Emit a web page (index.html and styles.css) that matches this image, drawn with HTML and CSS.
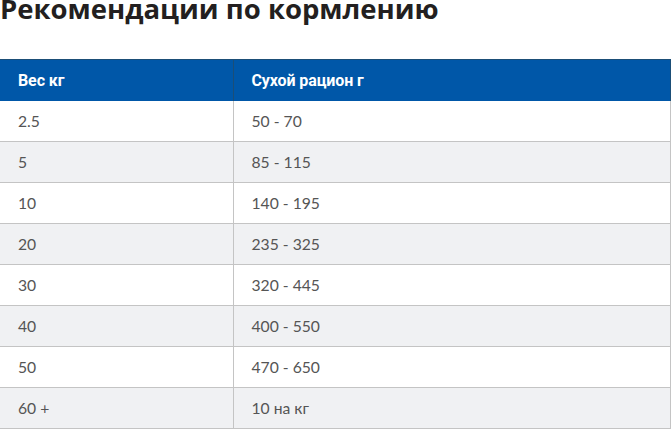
FILE: index.html
```html
<!DOCTYPE html>
<html lang="ru">
<head>
<meta charset="utf-8">
<link rel="stylesheet" href="styles.css">
</head>
<body>
<h1 class="title">Рекомендации по кормлению</h1>
<table class="feed">
  <thead>
    <tr><th class="c1">Вес кг</th><th>Сухой рацион г</th></tr>
  </thead>
  <tbody>
    <tr><td>2.5</td><td>50 - 70</td></tr>
    <tr><td>5</td><td>85 - 115</td></tr>
    <tr><td>10</td><td>140 - 195</td></tr>
    <tr><td>20</td><td>235 - 325</td></tr>
    <tr><td>30</td><td>320 - 445</td></tr>
    <tr><td>40</td><td>400 - 550</td></tr>
    <tr><td>50</td><td>470 - 650</td></tr>
    <tr><td>60 +</td><td>10 на кг</td></tr>
  </tbody>
</table>
</body>
</html>
```
FILE: styles.css
```css
html, body {
  margin: 0;
  padding: 0;
  background: #fff;
}
body {
  font-family: Lato, "Liberation Sans", sans-serif;
  overflow: hidden;
}
.title {
  margin: -9px 0 0 0;
  height: 68px;
  font-family: "Open Sans", "Liberation Sans", sans-serif;
  font-weight: 700;
  font-size: 27.5px;
  line-height: 36px;
  color: #231f20;
}
.feed {
  width: 671px;
  border-collapse: collapse;
  border-top: 1px solid #1b4e77;
  table-layout: fixed;
}
.feed th {
  background: #0057a8;
  color: #fff;
  font-family: Roboto, "Liberation Sans", sans-serif;
  font-weight: 700;
  font-size: 16px;
  letter-spacing: -0.1px;
  text-align: left;
  height: 41px;
  padding: 0 0 0 18px;
  box-sizing: border-box;
  border-right: 1px solid #1b4e77;
}
.feed th.c1 {
  width: 233px;
}
.feed td {
  height: 41px;
  box-sizing: border-box;
  padding: 0 0 0 18px;
  font-size: 15.7px;
  color: #555;
  border-bottom: 1px solid #c4c4c4;
  border-right: 1px solid #c4c4c4;
}
.feed tbody tr:nth-child(even) td {
  background: #f0f1f3;
}
```
